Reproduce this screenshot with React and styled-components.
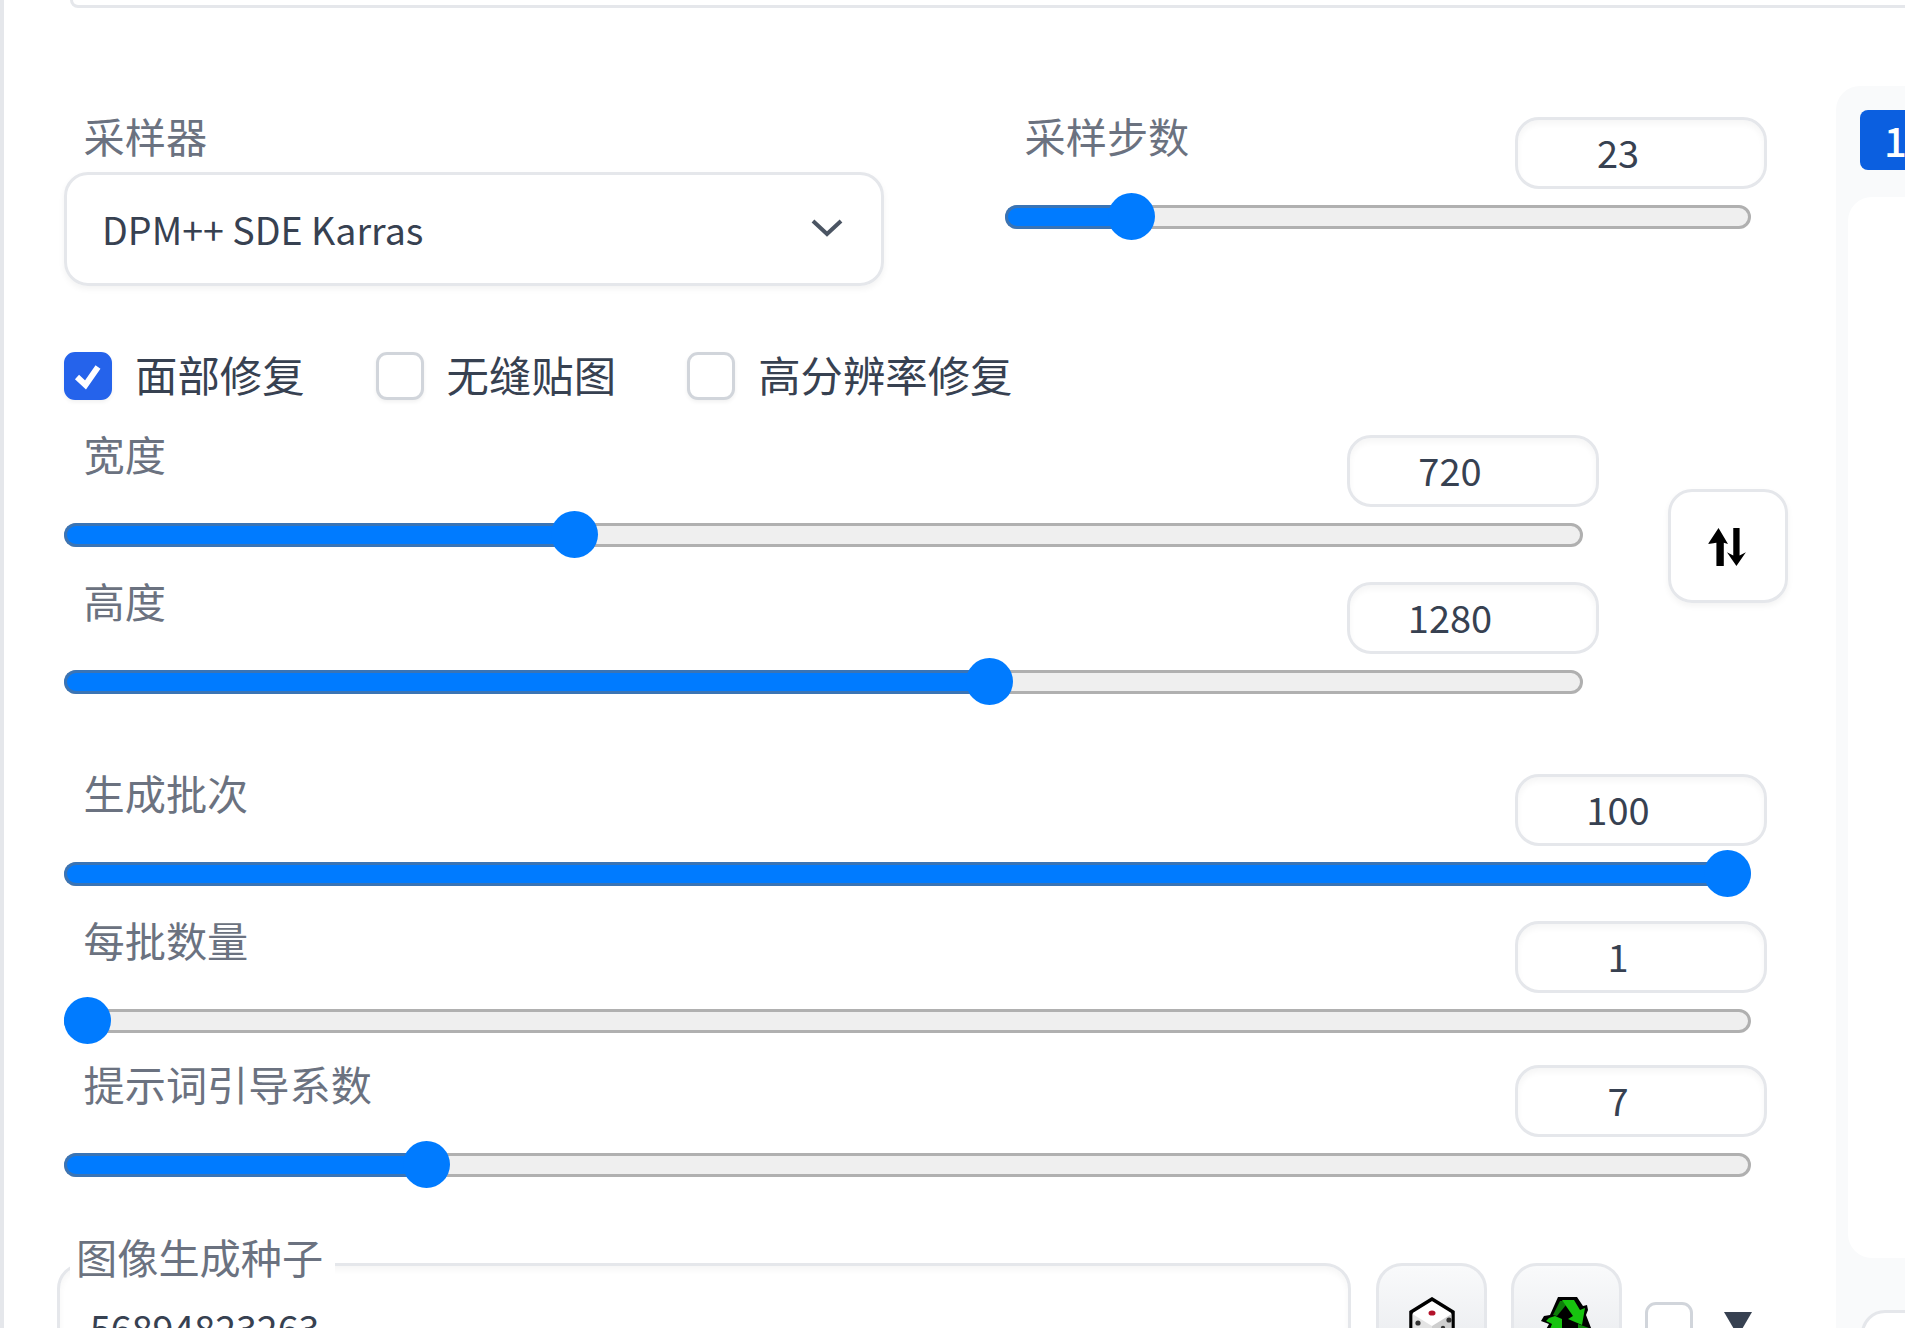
import React from "react";
import styled, { createGlobalStyle } from "styled-components";

const FONT = `"Noto Sans CJK SC", "Noto Sans", sans-serif`;

const GlobalStyle = createGlobalStyle`
  html, body {
    margin: 0;
    padding: 0;
    background: #fff;
  }
  * {
    box-sizing: border-box;
  }
`;

const Slider = ({ label, value, min, max, gap = 35 }) => {
  const ratio = (value - min) / (max - min);
  return (
    <SliderField $gap={gap}>
      <SliderHead>
        <FieldLabel>{label}</FieldLabel>
        <NumberBox>{value}</NumberBox>
      </SliderHead>
      <Track>
        <Fill style={{ width: `calc(23px + (100% - 41px) * ${ratio})` }} />
        <Thumb style={{ left: `calc((100% - 41px) * ${ratio})` }} />
      </Track>
    </SliderField>
  );
};

const Check = ({ on, children }) => (
  <CheckItem>
    <CheckBox $on={on}>
      {on && (
        <svg width="30" height="30" viewBox="0 0 30 30">
          <path d="M4 16l8.5 8L25 6" fill="none" stroke="#fff" strokeWidth="6" />
        </svg>
      )}
    </CheckBox>
    <CheckText>{children}</CheckText>
  </CheckItem>
);

const DiceIcon = () => (
  <svg width="50" height="56" viewBox="0 0 50 56">
    <path d="M25 2L4 15v36l21 13 21-13V15z" fill="#fff" stroke="#000" strokeWidth="3.5" />
    <path d="M5.5 17L25 29v27L5.5 44z" fill="#e4e4e4" />
    <path d="M44.5 17L25 29v27l19.5-12z" fill="#cfcfcf" />
    <ellipse cx="25" cy="16" rx="3.5" ry="2.6" fill="#b3122a" />
    <circle cx="11" cy="26" r="2.6" fill="#333" />
    <circle cx="42" cy="23" r="2.6" fill="#333" />
    <circle cx="36" cy="31" r="2.2" fill="#333" />
  </svg>
);

const RecycleIcon = () => (
  <svg width="54" height="56" viewBox="0 0 54 56">
    <path d="M18 0h19l6 9 4-1 1 5-2 5 7 18H4l5-9-8-3 3-5 6-1z" fill="#000" />
    <path d="M20 4l-7 14 4 1 9-11-3-4z" fill="#0e7d0a" />
    <path d="M22 3h12l6 10 5-2-3 17-14-6 5-3-7-10z" fill="#17c40f" />
    <path d="M15 19l7 3v10H10l2-5-6-3 3-3z" fill="#17c40f" />
    <path d="M38 27l11 4v3H38z" fill="#0e8a0a" />
  </svg>
);

const App = () => (
  <>
    <GlobalStyle />
    <Page>
      <MainColumn>
        <TopStrip />
        <SamplerRow>
          <SamplerField>
            <FieldLabel>采样器</FieldLabel>
            <Select>
              DPM++ SDE Karras
              <svg width="32" height="18" viewBox="0 0 32 18">
                <path d="M2 2l14 13L30 2" fill="none" stroke="#4b5563" strokeWidth="4" />
              </svg>
            </Select>
          </SamplerField>
          <StepsField>
            <Slider label="采样步数" value={23} min={1} max={150} gap={0} />
          </StepsField>
        </SamplerRow>

        <CheckRow>
          <Check on>面部修复</Check>
          <Check>无缝贴图</Check>
          <Check>高分辨率修复</Check>
        </CheckRow>

        <SizeRow>
          <SizeSliders>
            <Slider label="宽度" value={720} min={64} max={2048} />
            <Slider label="高度" value={1280} min={64} max={2048} gap={0} />
          </SizeSliders>
          <SwapButton>
            <svg width="40" height="40" viewBox="0 0 38 38">
              <path d="M10 2l9 15-4-1v22H8V16l-8 1zM24 2h6v26l6-3-9 13-9-13 6 3z" fill="#000" />
            </svg>
          </SwapButton>
        </SizeRow>

        <BatchGroup>
          <Slider label="生成批次" value={100} min={1} max={100} />
          <Slider label="每批数量" value={1} min={1} max={8} gap={32} />
          <Slider label="提示词引导系数" value={7} min={1} max={30} gap={0} />
        </BatchGroup>

        <SeedRow>
          <SeedBox>
            <SeedLabel>图像生成种子</SeedLabel>
            <SeedValue>56894823263</SeedValue>
          </SeedBox>
          <IconButton>
            <DiceIcon />
          </IconButton>
          <IconButton>
            <RecycleIcon />
          </IconButton>
          <SeedCheck />
          <Triangle />
        </SeedRow>
      </MainColumn>

      <SidePanel>
        <TabBar>
          <Tab>1</Tab>
        </TabBar>
        <TabBody />
        <SideFooter />
      </SidePanel>
    </Page>
  </>
);

const Page = styled.div`
  display: flex;
  width: 1905px;
  height: 1328px;
  overflow: hidden;
  background: #fff;
  border-left: 4px solid #e5e7eb;
  font-family: ${FONT};
`;

const MainColumn = styled.div`
  width: 1832px;
  flex: none;
  padding-left: 60px;
`;

const TopStrip = styled.div`
  width: 1900px;
  height: 8px;
  margin-left: 6px;
  border: 3px solid #e5e7eb;
  border-top: 0;
  border-radius: 0 0 20px 20px;
`;

const SamplerRow = styled.div`
  display: flex;
  gap: 122px;
  margin-top: 109px;
`;

const SamplerField = styled.div`
  width: 820px;
`;

const StepsField = styled.div`
  width: 762px;
  margin-left: -1px;
`;

const FieldLabel = styled.span`
  display: block;
  margin: -10px 0 9px;
  padding-left: 19.5px;
  color: #6b7280;
  font-size: 41.2px;
  line-height: 56px;
`;

const Select = styled.div`
  display: flex;
  align-items: center;
  justify-content: space-between;
  height: 114px;
  padding: 0 38px 2px 35px;
  color: #374151;
  font-size: 37.6px;
  border: 3px solid #e5e7eb;
  border-radius: 24px;
  box-shadow: 0 3px 6px rgba(0, 0, 0, 0.05);
`;

const SliderField = styled.div`
  margin-bottom: ${(p) => p.$gap}px;
`;

const SliderHead = styled.div`
  display: flex;
  justify-content: space-between;
  align-items: flex-start;
`;

const NumberBox = styled.div`
  width: 252px;
  height: 72px;
  padding-right: 46px;
  color: #374151;
  font-size: 38px;
  line-height: 64px;
  text-align: center;
  border: 3px solid #e5e7eb;
  border-radius: 24px;
  box-shadow: inset 0 4px 6px rgba(0, 0, 0, 0.04);
`;

const Track = styled.div`
  position: relative;
  height: 24px;
  margin: 16px 16px 0 0;
  background: #efefef;
  border: 3px solid #b0b0b0;
  border-radius: 12px;
`;

const Fill = styled.div`
  position: absolute;
  top: -3px;
  bottom: -3px;
  left: -3px;
  background: #007bff;
  border: 3px solid #3a74b5;
  border-right: 0;
  border-radius: 12px 0 0 12px;
`;

const Thumb = styled.div`
  position: absolute;
  top: -15px;
  width: 47px;
  height: 47px;
  margin-left: -3px;
  background: #007bff;
  border-radius: 50%;
`;

const CheckRow = styled.div`
  display: flex;
  gap: 71px;
  margin-top: 66px;
  height: 48px;
`;

const CheckItem = styled.label`
  display: flex;
  align-items: flex-start;
  gap: 23px;
  color: #374151;
  font-size: 42.4px;
`;

const CheckText = styled.span`
  line-height: 44px;
`;

const CheckBox = styled.span`
  display: flex;
  align-items: center;
  justify-content: center;
  width: 48px;
  height: 48px;
  background: ${(p) => (p.$on ? "#2563eb" : "#fff")};
  border: 3px solid ${(p) => (p.$on ? "#2563eb" : "#d1d5db")};
  border-radius: 11px;
  box-shadow: 0 2px 4px rgba(0, 0, 0, 0.06);
`;

const SizeRow = styled.div`
  display: flex;
  align-items: flex-start;
  gap: 69px;
  margin-top: 35px;
`;

const SizeSliders = styled.div`
  width: 1535px;
`;

const SwapButton = styled.div`
  display: flex;
  align-items: center;
  justify-content: center;
  width: 120px;
  height: 114px;
  margin-top: 54px;
  border: 3px solid #e5e7eb;
  border-radius: 24px;
  box-shadow: 0 3px 6px rgba(0, 0, 0, 0.05);
`;

const BatchGroup = styled.div`
  width: 1703px;
  margin-top: 80px;
`;

const SeedRow = styled.div`
  display: flex;
  align-items: flex-start;
  margin: 86px 0 0 -7px;
`;

const SeedBox = styled.div`
  position: relative;
  width: 1294px;
  height: 120px;
  margin-right: 25px;
  padding: 33px 0 0 30px;
  border: 3px solid #e5e7eb;
  border-radius: 26px;
  box-shadow: inset 0 4px 6px rgba(0, 0, 0, 0.04);
`;

const SeedLabel = styled.span`
  position: absolute;
  top: -38px;
  left: 10px;
  padding: 0 12px 0 6px;
  color: #6b7280;
  font-size: 41.2px;
  line-height: 56px;
  background: #fff;
`;

const SeedValue = styled.div`
  color: #374151;
  font-size: 37.6px;
  line-height: 56px;
`;

const IconButton = styled.div`
  display: flex;
  justify-content: center;
  flex: none;
  width: 111px;
  height: 120px;
  margin-right: 24px;
  padding-top: 31px;
  background: linear-gradient(#f9fafb, #e5e7eb);
  border: 3px solid #e5e7eb;
  border-radius: 26px;
`;

const SeedCheck = styled.div`
  flex: none;
  width: 48px;
  height: 48px;
  margin: 39px 31px 0 -1px;
  border: 3px solid #d1d5db;
  border-radius: 11px;
`;

const Triangle = styled.div`
  flex: none;
  width: 0;
  height: 0;
  margin-top: 49px;
  border-left: 14.5px solid transparent;
  border-right: 14.5px solid transparent;
  border-top: 24px solid #374151;
`;

const SidePanel = styled.div`
  flex: none;
  width: 90px;
  height: 1300px;
  margin-top: 86px;
  padding: 24px 0 0 12px;
  background: #f9fafb;
  border-radius: 24px 0 0 0;
`;

const TabBar = styled.div`
  padding-left: 12px;
`;

const Tab = styled.div`
  width: 60px;
  height: 60px;
  padding-left: 24px;
  color: #fff;
  font-size: 40px;
  font-weight: 500;
  line-height: 60px;
  background: #0b5fe0;
  border-radius: 8px 0 0 8px;
`;

const TabBody = styled.div`
  height: 1061px;
  margin-top: 27px;
  background: #fff;
  border-radius: 24px 0 0 24px;
`;

const SideFooter = styled.div`
  height: 60px;
  margin: 52px 0 0 13px;
  background: #fff;
  border: 3px solid #e5e7eb;
  border-radius: 24px 0 0 0;
`;

export default App;
